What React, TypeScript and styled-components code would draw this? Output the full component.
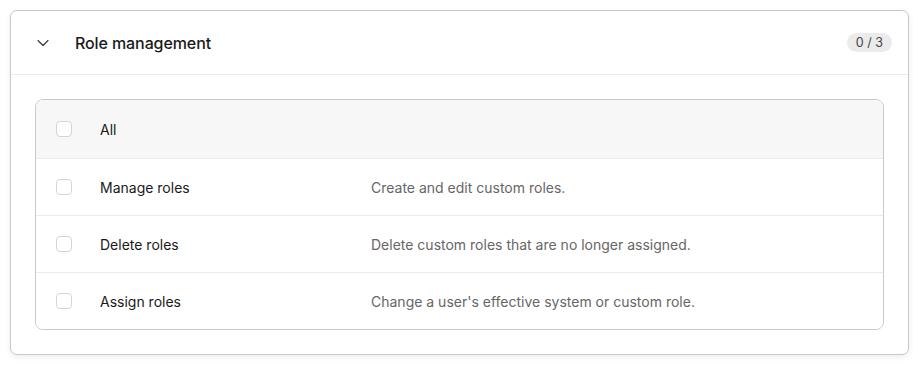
import React, { FunctionComponent } from 'react'
import styled, { createGlobalStyle } from 'styled-components'
import { ChevronDown } from 'lucide-react'

const GlobalStyle = createGlobalStyle`
  *, *::before, *::after {
    box-sizing: border-box;
  }
  body {
    margin: 0;
    padding: 10px;
    background: #ffffff;
    font-family: Inter, "Liberation Sans", sans-serif;
    color: #1a1a1a;
  }
`

const Card = styled.section`
  border: 1px solid #c9c9c9;
  border-radius: 7px;
  background: #ffffff;
  box-shadow: 0 2px 6px rgba(0, 0, 0, 0.08);
`

const Header = styled.header`
  display: flex;
  align-items: center;
  height: 64px;
  padding: 0 16px 0 22px;
  border-bottom: 1px solid #ebebeb;
`

const Toggle = styled.span`
  display: flex;
  align-items: center;
  justify-content: center;
  width: 20px;
  color: #333;
  margin-right: 22px;
`

const Title = styled.h2`
  flex: 1;
  margin: 0;
  font-size: 16px;
  font-weight: 500;
  letter-spacing: -0.1px;
`

const Badge = styled.span`
  background: #ebebeb;
  color: #444;
  font-size: 12.5px;
  line-height: 19px;
  padding: 0 9px;
  border-radius: 10px;
`

const Body = styled.div`
  padding: 24px;
`

const Table = styled.div`
  border: 1px solid #c9c9c9;
  border-radius: 8px;
  overflow: hidden;
`

const Row = styled.div<{ $head?: boolean }>`
  display: grid;
  grid-template-columns: 64px 271px 1fr;
  align-items: center;
  height: ${(p) => (p.$head ? '58px' : '57px')};
  background: ${(p) => (p.$head ? '#f7f7f7' : '#ffffff')};
  font-size: 14px;
  & + & {
    border-top: 1px solid #ebebeb;
  }
`

const Check = styled.span`
  display: block;
  width: 16px;
  height: 16px;
  margin-left: 20px;
  border: 1px solid #d4d4d4;
  border-radius: 4px;
  background: #fff;
`

const Label = styled.span`
  color: #1a1a1a;
`

const Desc = styled.span`
  color: #666666;
`

interface Permission {
  name: string
  description: string
}

const permissions: Permission[] = [
  { name: 'Manage roles', description: 'Create and edit custom roles.' },
  { name: 'Delete roles', description: 'Delete custom roles that are no longer assigned.' },
  { name: 'Assign roles', description: "Change a user's effective system or custom role." },
]

const App: FunctionComponent = () => {
  return (
    <>
      <GlobalStyle />
      <Card>
        <Header>
          <Toggle>
            <ChevronDown size={20} strokeWidth={1.3} />
          </Toggle>
          <Title>Role management</Title>
          <Badge>0 / {permissions.length}</Badge>
        </Header>
        <Body>
          <Table>
            <Row $head>
              <Check />
              <Label>All</Label>
            </Row>
            {permissions.map(({ name, description }) => (
              <Row key={name}>
                <Check />
                <Label>{name}</Label>
                <Desc>{description}</Desc>
              </Row>
            ))}
          </Table>
        </Body>
      </Card>
    </>
  )
}

export default App
